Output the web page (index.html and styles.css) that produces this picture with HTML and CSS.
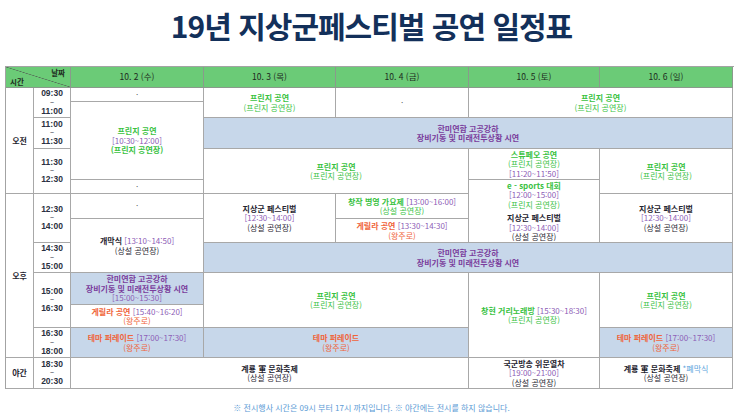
FILE: index.html
```html
<!DOCTYPE html>
<html lang="ko">
<head>
<meta charset="utf-8">
<title>19년 지상군페스티벌 공연 일정표</title>
<link rel="stylesheet" href="styles.css">
</head>
<body>
<h1 class="title">19년 지상군페스티벌 공연 일정표</h1>
<div class="sheet">
  <div class="cell head corner"><span class="corner-date">날짜</span><span class="corner-time">시간</span></div>
  <div class="cell head h2">10. 2 (수)</div>
  <div class="cell head h3">10. 3 (목)</div>
  <div class="cell head h4">10. 4 (금)</div>
  <div class="cell head h5">10. 5 (토)</div>
  <div class="cell head h6">10. 6 (일)</div>

  <div class="cell period am">오전</div>
  <div class="cell period pm">오후</div>
  <div class="cell period night">야간</div>

  <div class="cell time t1"><p>09:30</p><p class="tilde">~</p><p>11:00</p></div>
  <div class="cell time t2"><p>11:00</p><p class="tilde">~</p><p>11:30</p></div>
  <div class="cell time t3"><p>11:30</p><p class="tilde">~</p><p>12:30</p></div>
  <div class="cell time t4"><p>12:30</p><p class="tilde">~</p><p>14:00</p></div>
  <div class="cell time t5"><p>14:30</p><p class="tilde">~</p><p>15:00</p></div>
  <div class="cell time t6"><p>15:00</p><p class="tilde">~</p><p>16:30</p></div>
  <div class="cell time t7"><p>16:30</p><p class="tilde">~</p><p>18:00</p></div>
  <div class="cell time t8"><p>18:30</p><p class="tilde">~</p><p>20:30</p></div>

  <!-- 10.2 -->
  <div class="cell dot a-d2-1">·</div>
  <div class="cell a-d2-2"><p class="g b">프린지 공연</p><p class="p">[10:30~12:00]</p><p class="g b">(프린지 공연장)</p></div>
  <div class="cell dot a-d2-3">·</div>
  <div class="cell dot a-d2-4">·</div>
  <div class="cell a-d2-5"><p><b class="k">개막식</b> <span class="p">[13:10~14:50]</span></p><p class="k">(상설 공연장)</p></div>
  <div class="cell band a-d2-6"><p class="v b">한미연합 고공강하</p><p class="v b">장비기동 및 미래전투상황 시연</p><p class="p">[15:00~15:30]</p></div>
  <div class="cell a-d2-7"><p><b class="o">게릴라 공연</b> <span class="p">[15:40~16:20]</span></p><p class="o">(왕주로)</p></div>
  <div class="cell band a-d2-8"><p><b class="o">테마 퍼레이드</b> <span class="p">[17:00~17:30]</span></p><p class="o">(왕주로)</p></div>
  <div class="cell a-d2-9"><p class="k b">계룡 軍 문화축제</p><p class="k">(상설 공연장)</p></div>

  <!-- 10.3 -->
  <div class="cell a-d3-1"><p class="g b">프린지 공연</p><p class="g">(프린지 공연장)</p></div>
  <div class="cell band a-d3-2"><p class="v b">한미연합 고공강하</p><p class="v b">장비기동 및 미래전투상황 시연</p></div>
  <div class="cell a-d3-3"><p class="g b">프린지 공연</p><p class="g">(프린지 공연장)</p></div>
  <div class="cell a-d3-4"><p class="k b">지상군 페스티벌</p><p class="p">[12:30~14:00]</p><p class="k">(상설 공연장)</p></div>
  <div class="cell band a-d3-5"><p class="v b">한미연합 고공강하</p><p class="v b">장비기동 및 미래전투상황 시연</p></div>
  <div class="cell a-d3-6"><p class="g b">프린지 공연</p><p class="g">(프린지 공연장)</p></div>
  <div class="cell band a-d3-7"><p class="o b">테마 퍼레이드</p><p class="o">(왕주로)</p></div>

  <!-- 10.4 -->
  <div class="cell dot a-d4-1">·</div>
  <div class="cell a-d4-2"><p><b class="g">창작 병영 가요제</b> <span class="p">[13:00~16:00]</span></p><p class="g">(상설 공연장)</p></div>
  <div class="cell a-d4-3"><p><b class="o">게릴라 공연</b> <span class="p">[13:30~14:30]</span></p><p class="o">(왕주로)</p></div>

  <!-- 10.5 -->
  <div class="cell a-d5-1"><p class="g b">프린지 공연</p><p class="g">(프린지 공연장)</p></div>
  <div class="cell a-d5-2"><p class="g b">스튜페오 공연</p><p class="g">(프린지 공연장)</p><p class="p">[11:20~11:50]</p></div>
  <div class="cell a-d5-3"><p class="g b">e - sports 대회</p><p class="p">[12:00~15:00]</p><p class="g">(프린지 공연장)</p><p class="gap"></p><p class="k b">지상군 페스티벌</p><p class="p">[12:30~14:00]</p><p class="k">(상설 공연장)</p></div>
  <div class="cell a-d5-4"><p><b class="g">창현 거리노래방</b> <span class="p">[15:30~18:30]</span></p><p class="g">(프린지 공연장)</p></div>
  <div class="cell a-d5-5"><p class="k b">국군방송 위문열차</p><p class="p">[19:00~21:00]</p><p class="k">(상설 공연장)</p></div>

  <!-- 10.6 -->
  <div class="cell a-d6-1"><p class="g b">프린지 공연</p><p class="g">(프린지 공연장)</p></div>
  <div class="cell a-d6-2"><p class="k b">지상군 페스티벌</p><p class="p">[12:30~14:00]</p><p class="k">(상설 공연장)</p></div>
  <div class="cell a-d6-3"><p class="g b">프린지 공연</p><p class="g">(프린지 공연장)</p></div>
  <div class="cell band a-d6-4"><p><b class="o">테마 퍼레이드</b> <span class="p">[17:00~17:30]</span></p><p class="o">(왕주로)</p></div>
  <div class="cell a-d6-5"><p><b class="k">계룡 軍 문화축제</b> <span class="sky">*폐막식</span></p><p class="k">(상설 공연장)</p></div>
</div>
<p class="note">※ 전시행사 시간은 09시 부터 17시 까지입니다. ※ 야간에는 전시를 하지 않습니다.</p>
</body>
</html>
```
FILE: styles.css
```css
* { box-sizing: border-box; }

body {
  margin: 0;
  background: #ffffff;
  color: #222222;
  font-family: "Noto Sans CJK KR", "Noto Sans", sans-serif;
}

.title {
  margin: 0;
  height: 66px;
  padding-top: 8px;
  text-align: center;
  font-size: 30px;
  line-height: 34px;
  font-weight: 700;
  letter-spacing: -1px;
  color: #13305a;
}

.sheet {
  display: grid;
  grid-template-columns: 28px 37px 133px 132px 133px 131px 133px;
  grid-template-rows: 21px 14px 16px 31px 31px 14px 25px 24px 30px 32px 23px 30px 31px;
  width: 729px;
  margin-left: 5px;
  border-top: 1px solid #a3a3a3;
  border-left: 1px solid #a3a3a3;
}

.cell {
  display: flex;
  flex-direction: column;
  justify-content: center;
  align-items: center;
  text-align: center;
  white-space: nowrap;
  border-right: 1px solid #a8a8a8;
  border-bottom: 1px solid #a8a8a8;
  font-size: 8px;
  line-height: 9.5px;
  background: #ffffff;
}

.cell p { margin: 0; }

.b { font-weight: 700; }
.g { color: #39c23f; }
.p { color: #8d5db6; }
.v { color: #7a3d9c; }
.o { color: #f0643a; }
.k { color: #1f2530; }
.sky { color: #5ba3dc; }

.gap { height: 4px; }

.head {
  background: #6bcb77;
  color: #1d2a20;
  font-size: 8.5px;
  border-color: #8a9a8c;
}

.corner {
  grid-area: 1 / 1 / 2 / 3;
  position: relative;
  background-color: #6bcb77;
  background-image: linear-gradient(to top right, transparent calc(50% - 0.6px), #556b58 50%, transparent calc(50% + 0.6px));
}
.corner-date {
  position: absolute;
  top: 1px;
  right: 5px;
  font-size: 7.5px;
  font-weight: 700;
  line-height: 9px;
}
.corner-time {
  position: absolute;
  bottom: 1px;
  left: 4px;
  font-size: 7.5px;
  font-weight: 700;
  line-height: 9px;
}

.h2 { grid-area: 1 / 3 / 2 / 4; }
.h3 { grid-area: 1 / 4 / 2 / 5; }
.h4 { grid-area: 1 / 5 / 2 / 6; }
.h5 { grid-area: 1 / 6 / 2 / 7; }
.h6 { grid-area: 1 / 7 / 2 / 8; }

.period {
  font-size: 8px;
  font-weight: 700;
  color: #1f2530;
}
.am { grid-area: 2 / 1 / 7 / 2; }
.pm { grid-area: 7 / 1 / 13 / 2; }
.night { grid-area: 13 / 1 / 14 / 2; }

.time {
  font-family: "Liberation Sans", Arial, sans-serif;
  font-size: 8.5px;
  font-weight: 700;
  line-height: 9.5px;
  color: #2a3140;
}
.time .tilde { font-size: 7px; line-height: 8px; font-weight: 400; }
.t1 { grid-area: 2 / 2 / 4 / 3; }
.t2 { grid-area: 4 / 2 / 5 / 3; }
.t3 { grid-area: 5 / 2 / 7 / 3; }
.t4 { grid-area: 7 / 2 / 9 / 3; }
.t5 { grid-area: 9 / 2 / 10 / 3; }
.t6 { grid-area: 10 / 2 / 12 / 3; }
.t7 { grid-area: 12 / 2 / 13 / 3; }
.t8 { grid-area: 13 / 2 / 14 / 3; }

.band { background: #c7d7ea; }
.dot { color: #555555; font-size: 8px; }

/* 10.2 */
.a-d2-1 { grid-area: 2 / 3 / 3 / 4; }
.a-d2-2 { grid-area: 3 / 3 / 6 / 4; }
.a-d2-3 { grid-area: 6 / 3 / 7 / 4; }
.a-d2-4 { grid-area: 7 / 3 / 8 / 4; }
.a-d2-5 { grid-area: 8 / 3 / 10 / 4; }
.a-d2-6 { grid-area: 10 / 3 / 11 / 4; }
.a-d2-7 { grid-area: 11 / 3 / 12 / 4; }
.a-d2-8 { grid-area: 12 / 3 / 13 / 4; }
.a-d2-9 { grid-area: 13 / 3 / 14 / 6; }

/* 10.3 */
.a-d3-1 { grid-area: 2 / 4 / 4 / 5; }
.a-d3-2 { grid-area: 4 / 4 / 5 / 8; }
.a-d3-3 { grid-area: 5 / 4 / 7 / 6; }
.a-d3-4 { grid-area: 7 / 4 / 9 / 5; }
.a-d3-5 { grid-area: 9 / 4 / 10 / 8; }
.a-d3-6 { grid-area: 10 / 4 / 12 / 6; }
.a-d3-7 { grid-area: 12 / 4 / 13 / 6; }

/* 10.4 */
.a-d4-1 { grid-area: 2 / 5 / 4 / 6; }
.a-d4-2 { grid-area: 7 / 5 / 8 / 6; }
.a-d4-3 { grid-area: 8 / 5 / 9 / 6; }

/* 10.5 */
.a-d5-1 { grid-area: 2 / 6 / 4 / 8; }
.a-d5-2 { grid-area: 5 / 6 / 6 / 7; }
.a-d5-3 { grid-area: 6 / 6 / 9 / 7; }
.a-d5-4 { grid-area: 10 / 6 / 13 / 7; }
.a-d5-5 { grid-area: 13 / 6 / 14 / 7; }

/* 10.6 */
.a-d6-1 { grid-area: 5 / 7 / 7 / 8; }
.a-d6-2 { grid-area: 7 / 7 / 9 / 8; }
.a-d6-3 { grid-area: 10 / 7 / 12 / 8; }
.a-d6-4 { grid-area: 12 / 7 / 13 / 8; }
.a-d6-5 { grid-area: 13 / 7 / 14 / 8; }

.note {
  margin: 13px 0 0;
  text-align: center;
  font-size: 8px;
  line-height: 12px;
  color: #5b9bd5;
}
```
